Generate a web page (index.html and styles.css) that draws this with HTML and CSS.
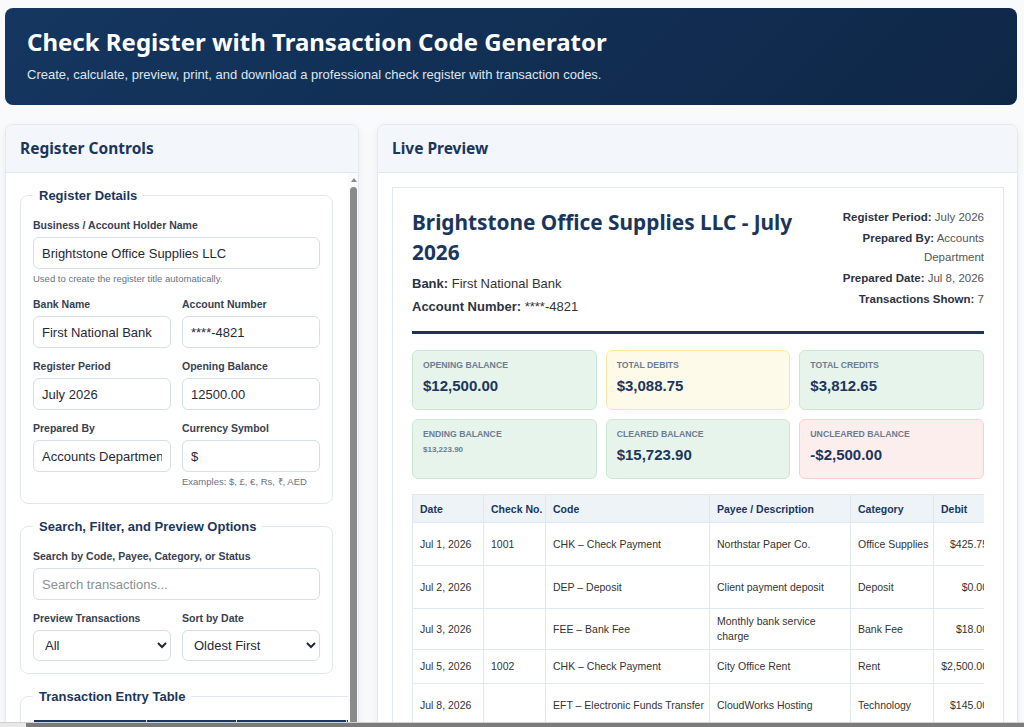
FILE: index.html
```html
<!DOCTYPE html>
<html lang="en">
<head>
    <meta charset="UTF-8">
    <title>Check Register with Transaction Code Generator</title>
    <link rel="stylesheet" href="styles.css">
</head>
<body>
    <div class="header">
        <h1>Check Register with Transaction Code Generator</h1>
        <p>Create, calculate, preview, print, and download a professional check register with transaction codes.</p>
    </div>

    <div class="workspace">
        <!-- left side: the form -->
        <div class="panel">
            <div class="panel-head"><h2>Register Controls</h2></div>
            <div class="scroll-area">
                <div class="panel-body scroll">
                    <fieldset>
                        <legend>Register Details</legend>
                        <div class="field">
                            <label>Business / Account Holder Name</label>
                            <input type="text" value="Brightstone Office Supplies LLC">
                            <small>Used to create the register title automatically.</small>
                        </div>
                        <div class="row">
                            <div class="field">
                                <label>Bank Name</label>
                                <input type="text" value="First National Bank">
                            </div>
                            <div class="field">
                                <label>Account Number</label>
                                <input type="text" value="****-4821">
                            </div>
                        </div>
                        <div class="row">
                            <div class="field">
                                <label>Register Period</label>
                                <input type="text" value="July 2026">
                            </div>
                            <div class="field">
                                <label>Opening Balance</label>
                                <input type="text" value="12500.00">
                            </div>
                        </div>
                        <div class="row">
                            <div class="field">
                                <label>Prepared By</label>
                                <input type="text" value="Accounts Department">
                            </div>
                            <div class="field">
                                <label>Currency Symbol</label>
                                <input type="text" value="$">
                                <small>Examples: $, £, €, Rs, ₹, AED</small>
                            </div>
                        </div>
                    </fieldset>

                    <fieldset>
                        <legend>Search, Filter, and Preview Options</legend>
                        <div class="field">
                            <label>Search by Code, Payee, Category, or Status</label>
                            <input type="text" placeholder="Search transactions...">
                        </div>
                        <div class="row">
                            <div class="field">
                                <label>Preview Transactions</label>
                                <select><option>All</option><option>Cleared</option><option>Uncleared</option></select>
                            </div>
                            <div class="field">
                                <label>Sort by Date</label>
                                <select><option>Oldest First</option><option>Newest First</option></select>
                            </div>
                        </div>
                    </fieldset>

                    <fieldset>
                        <legend>Transaction Entry Table</legend>
                        <table class="entry">
                            <colgroup><col class="e-date"><col class="e-check"><col class="e-code"><col class="e-payee"></colgroup>
                            <tr><th>Date</th><th>Check No.</th><th>Code</th><th>Payee</th></tr>
                            <tr><td>2026-07-01</td><td>1001</td><td>CHK</td><td>Northstar Paper Co.</td></tr>
                            <tr><td>2026-07-02</td><td></td><td>DEP</td><td>Client payment deposit</td></tr>
                        </table>
                    </fieldset>
                </div>
                <div class="scrollbar"><span class="arrow"></span><span class="thumb"></span></div>
            </div>
        </div>

        <!-- right side: the register preview -->
        <div class="panel">
            <div class="panel-head"><h2>Live Preview</h2></div>
            <div class="panel-body preview-body">
                <div class="paper">
                    <div class="paper-top">
                        <div class="paper-title">
                            <h3>Brightstone Office Supplies LLC - July 2026</h3>
                            <p><b>Bank:</b> First National Bank</p>
                            <p><b>Account Number:</b> ****-4821</p>
                        </div>
                        <div class="paper-meta">
                            <p><b>Register Period:</b> July 2026</p>
                            <p><b>Prepared By:</b> Accounts Department</p>
                            <p><b>Prepared Date:</b> Jul 8, 2026</p>
                            <p><b>Transactions Shown:</b> 7</p>
                        </div>
                    </div>

                    <div class="summary">
                        <div class="card green"><span>Opening Balance</span><strong>$12,500.00</strong></div>
                        <div class="card yellow"><span>Total Debits</span><strong>$3,088.75</strong></div>
                        <div class="card green"><span>Total Credits</span><strong>$3,812.65</strong></div>
                        <div class="card green"><span>Ending Balance</span><em>$13,223.90</em></div>
                        <div class="card green"><span>Cleared Balance</span><strong>$15,723.90</strong></div>
                        <div class="card red"><span>Uncleared Balance</span><strong>-$2,500.00</strong></div>
                    </div>

                    <div class="table-wrap">
                        <table class="register">
                            <colgroup>
                                <col class="c-date"><col class="c-check"><col class="c-code"><col class="c-payee">
                                <col class="c-cat"><col class="c-money"><col class="c-money"><col class="c-bal"><col class="c-status">
                            </colgroup>
                            <tr>
                                <th>Date</th><th>Check No.</th><th>Code</th><th>Payee / Description</th>
                                <th>Category</th><th>Debit</th><th>Credit</th><th>Balance</th><th>Status</th>
                            </tr>
                            <tr class="tall">
                                <td>Jul 1, 2026</td><td>1001</td><td>CHK – Check Payment</td><td class="wrap">Northstar Paper Co.</td>
                                <td>Office Supplies</td><td class="num">$425.75</td><td class="num">$0.00</td><td class="num">$12,074.25</td><td>Cleared</td>
                            </tr>
                            <tr class="tall">
                                <td>Jul 2, 2026</td><td></td><td>DEP – Deposit</td><td class="wrap">Client payment deposit</td>
                                <td>Deposit</td><td class="num">$0.00</td><td class="num">$3,200.00</td><td class="num">$15,274.25</td><td>Cleared</td>
                            </tr>
                            <tr class="mid">
                                <td>Jul 3, 2026</td><td></td><td>FEE – Bank Fee</td><td class="wrap">Monthly bank service charge</td>
                                <td>Bank Fee</td><td class="num">$18.00</td><td class="num">$0.00</td><td class="num">$15,256.25</td><td>Cleared</td>
                            </tr>
                            <tr>
                                <td>Jul 5, 2026</td><td>1002</td><td>CHK – Check Payment</td><td class="wrap">City Office Rent</td>
                                <td>Rent</td><td class="num">$2,500.00</td><td class="num">$0.00</td><td class="num">$12,756.25</td><td>Open</td>
                            </tr>
                            <tr class="tall">
                                <td>Jul 8, 2026</td><td></td><td>EFT – Electronic Funds Transfer</td><td class="wrap">CloudWorks Hosting</td>
                                <td>Technology</td><td class="num">$145.00</td><td class="num">$0.00</td><td class="num">$12,611.25</td><td>Cleared</td>
                            </tr>
                        </table>
                    </div>
                </div>
            </div>
        </div>
    </div>

    <div class="page-scrollbar"><span></span></div>
</body>
</html>
```

FILE: styles.css
```css
/* base */
* {
    box-sizing: border-box;
}

html {
    scrollbar-width: none;
}

body {
    margin: 0;
    padding: 8px 6px 0 5px;
    background: #f8fafc;
    font-family: 'Liberation Sans', Arial, sans-serif;
    color: #1f2937;
}

.header {
    background: linear-gradient(135deg, #143660, #0f2747);
    color: white;
    border-radius: 8px;
    padding: 18px 22px 0;
    height: 97px;
    margin-right: 1px;
}

.header h1 {
    margin: 0;
    font-family: 'Noto Sans', sans-serif;
    font-size: 24px;
    font-weight: 700;
    line-height: 32px;
}

.header p {
    margin: 9px 0 0;
    font-size: 13px;
    line-height: 16px;
    color: #dde6f1;
}

.workspace {
    display: grid;
    grid-template-columns: 354px 1fr;
    gap: 18px;
    margin-top: 19px;
    align-items: start;
}

/* panels */
.panel {
    background: white;
    border: 1px solid #e3e8ef;
    border-radius: 8px;
    box-shadow: 0 2px 10px rgba(15, 39, 71, 0.06);
    overflow: hidden;
}

.panel-head {
    height: 48px;
    padding: 0 14px;
    display: flex;
    align-items: center;
    background: #f3f6fa;
    border-bottom: 1px solid #e3e8ef;
}

.panel-head h2 {
    margin: 0 0 1px;
    font-family: 'Noto Sans', sans-serif;
    font-size: 15.5px;
    font-weight: 700;
    color: #1b365d;
}

.panel-body {
    padding: 14px;
}

.preview-body {
    padding: 14px 13px 14px 14px;
}

.scroll-area {
    display: flex;
    height: 620px;
}

.scroll {
    flex: 1;
    min-width: 0;
    overflow: hidden;
    padding: 15px 15px 16px 14px;
}

.scrollbar {
    width: 10px;
    flex-shrink: 0;
    display: flex;
    flex-direction: column;
    align-items: center;
    padding: 5px 0 0 1px;
    background: #fafafa;
}

.scrollbar .arrow {
    width: 0;
    height: 0;
    border-left: 3px solid transparent;
    border-right: 3px solid transparent;
    border-bottom: 4px solid #8a8a8a;
}

.scrollbar .thumb {
    flex: 1;
    width: 7px;
    margin-top: 5px;
    border-radius: 4px;
    background: #8a8a8a;
}

.page-scrollbar {
    position: fixed;
    left: 0;
    right: 0;
    bottom: 0;
    height: 5px;
    padding-left: 26px;
    background: #e8e8e8;
    border-top: 1px solid #d0d0d0;
}

.page-scrollbar span {
    display: block;
    height: 4px;
    background: #7b7b7b;
}

/* form */
fieldset {
    margin: 0 0 15px;
    padding: 16px 12px 12px;
    border: 1px solid #e3e8ef;
    border-radius: 8px;
}

fieldset:first-child {
    padding-bottom: 14px;
}

legend {
    padding: 0 6px;
    font-size: 13px;
    font-weight: 700;
    line-height: 15px;
    color: #1b365d;
}

.field {
    margin-bottom: 12px;
}

.row {
    display: grid;
    grid-template-columns: 1fr 1fr;
    gap: 11px;
    margin-bottom: 12px;
}

.row .field,
fieldset > :last-child {
    margin-bottom: 0;
}

label {
    display: block;
    font-size: 10.5px;
    font-weight: 700;
    line-height: 13px;
    color: #374151;
    margin-bottom: 5px;
}

input,
select {
    display: block;
    width: 100%;
    height: 32px;
    padding: 0 8px;
    border: 1px solid #d6dee8;
    border-radius: 6px;
    background: white;
    font-family: 'Liberation Sans', Arial, sans-serif;
    font-size: 13px;
    color: #1f2937;
}

input::placeholder {
    color: #8a8f98;
}

select {
    height: 31px;
    padding: 0 7px;
}

small {
    display: block;
    margin-top: 2px;
    font-size: 9.5px;
    line-height: 15px;
    color: #6b7280;
}

.entry {
    border-collapse: collapse;
    table-layout: fixed;
    width: 460px;
    font-size: 11px;
}

.e-date { width: 113px; }
.e-check { width: 90px; }
.e-code { width: 110px; }

.entry th {
    height: 30px;
    background: #1b365d;
    color: white;
    text-align: left;
    padding: 0 8px;
    border-right: 1px solid #d9e2ec;
}

.entry td {
    height: 30px;
    padding: 0 8px;
    border: 1px solid #e3e8ef;
}

/* preview */
.paper {
    border: 1px solid #e2e8f0;
    padding: 19px;
    background: white;
}

.paper-top {
    display: flex;
    gap: 20px;
    padding-bottom: 11px;
    border-bottom: 3px solid #1b365d;
    margin-bottom: 16px;
}

.paper-title {
    flex: 1;
}

.paper-title h3 {
    margin: 0 0 7px;
    font-family: 'Noto Sans', sans-serif;
    font-size: 20.8px;
    font-weight: 700;
    line-height: 30px;
    color: #1b365d;
}

.paper-title p {
    margin: 0 0 3px;
    font-size: 13px;
    line-height: 20px;
    color: #333;
}

.paper-meta {
    width: 150px;
    flex-shrink: 0;
    padding-top: 1px;
    text-align: right;
    font-size: 11.5px;
    line-height: 19px;
    color: #555;
}

.paper-meta p {
    margin: 0 0 2px;
}

.paper-meta b,
.paper-title b {
    color: #2d3340;
}

.summary {
    display: grid;
    grid-template-columns: repeat(3, 1fr);
    gap: 9px;
}

.card {
    height: 60px;
    padding: 9px 10px;
    border: 1px solid;
    border-radius: 6px;
}

.card span {
    display: block;
    font-size: 8.7px;
    font-weight: 700;
    line-height: 11px;
    text-transform: uppercase;
    color: #6b7c93;
}

.card strong {
    display: block;
    margin-top: 5px;
    font-size: 15px;
    line-height: 20px;
    color: #1b365d;
}

.card em {
    display: block;
    margin-top: 5px;
    font-style: normal;
    font-size: 8px;
    font-weight: 700;
    line-height: 10px;
    color: #6b7c93;
}

.green {
    background: #e7f4ec;
    border-color: #cbe8d5;
}

.yellow {
    background: #fefae9;
    border-color: #fbe7a3;
}

.red {
    background: #fdeeee;
    border-color: #f8d0d0;
}

.table-wrap {
    margin-top: 15px;
    overflow: hidden;
}

.register {
    border-collapse: collapse;
    table-layout: fixed;
    width: 799px;
    font-size: 10.5px;
    color: #333;
}

.c-date { width: 71px; }
.c-check { width: 62px; }
.c-code { width: 164px; }
.c-payee { width: 141px; }
.c-cat { width: 83px; }
.c-money { width: 64px; }
.c-bal { width: 80px; }
.c-status { width: 70px; }

.register th {
    height: 28px;
    padding: 0 7px;
    background: #eef3f8;
    border: 1px solid #e2e8f0;
    text-align: left;
    font-size: 10.5px;
    color: #1b365d;
    white-space: nowrap;
}

.register td {
    height: 34px;
    padding: 4px 7px;
    border: 1px solid #e2e8f0;
    line-height: 15px;
    white-space: nowrap;
}

.register td.wrap {
    white-space: normal;
}

.register tr.tall td {
    height: 43px;
}

.register tr.mid td {
    height: 41px;
}

.register .num {
    text-align: right;
    padding-right: 9px;
}
```
